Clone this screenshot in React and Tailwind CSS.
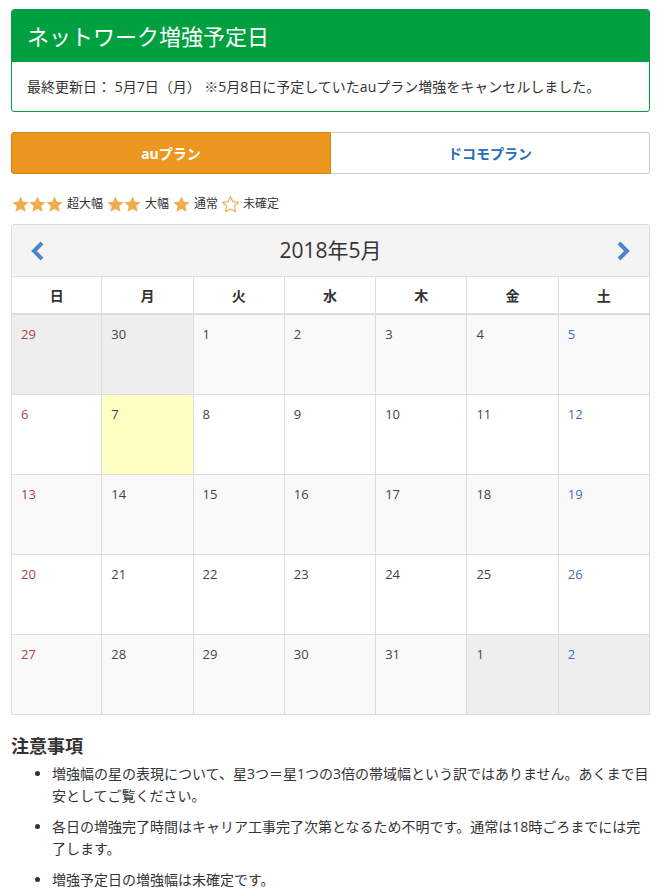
import React from "react";

const FONT = { fontFamily: '"Open Sans", "Noto Sans CJK JP", sans-serif' };

function StarIcon({ filled = true }) {
  return (
    <svg width="17" height="17" viewBox="0 0 24 24" className="shrink-0">
      <path
        d="M12 0.6l3.4 7.4 8.1.8-6.1 5.4 1.8 8L12 18.2l-7.2 4 1.8-8-6.1-5.4 8.1-.8z"
        fill={filled ? "#f0ad4e" : "#fff"}
        stroke="#f0ad4e"
        strokeWidth={filled ? 0 : 1.6}
        strokeLinejoin="round"
      />
    </svg>
  );
}

const weekdays = ["日", "月", "火", "水", "木", "金", "土"];

// [day, otherMonth]
const weeks = [
  [[29, true], [30, true], [1], [2], [3], [4], [5]],
  [[6], [7], [8], [9], [10], [11], [12]],
  [[13], [14], [15], [16], [17], [18], [19]],
  [[20], [21], [22], [23], [24], [25], [26]],
  [[27], [28], [29], [30], [31], [1, true], [2, true]],
];

function DayCell({ day, other, col, row, isToday }) {
  let bg = row % 2 === 0 ? "bg-[#f9f9f9]" : "bg-white";
  if (other) bg = "bg-[#eeeeee]";
  if (isToday) bg = "bg-[#ffffc4]";
  let color = "text-[#444]";
  if (col === 0) color = "text-[#a94442]";
  if (col === 6) color = "text-[#3f6fb5]";
  return (
    <div className={`h-[80px] border-r border-b border-[#dddddd] px-[9px] pt-[9px] text-[13px] leading-[20px] ${bg} ${color} ${col === 0 ? "border-l" : ""}`}>
      {day}
    </div>
  );
}

export default function App() {
  return (
    <div className="min-h-[889px] bg-white pt-[9px] text-[#333]" style={FONT}>
      <div className="ml-[11px] w-[639px]">
        {/* 見出しカード */}
        <div className="rounded-[3px] border border-[#00a040] overflow-hidden">
          <div className="bg-[#00a040] h-[52px] flex items-center px-[15px]">
            <h1 className="text-white text-[22px] font-normal leading-none">ネットワーク増強予定日</h1>
          </div>
          <div className="h-[49px] flex items-center px-[15px] text-[14px] text-[#333]">
            最終更新日： 5月7日（月） ※5月8日に予定していたauプラン増強をキャンセルしました。
          </div>
        </div>

        {/* タブ */}
        <div className="mt-[20px] flex h-[42px]">
          <button className="flex-1 bg-[#ec971f] border border-[#d58512] rounded-l-[3px] text-white font-bold text-[14px]">
            auプラン
          </button>
          <button className="flex-1 bg-white border border-l-0 border-[#cccccc] rounded-r-[3px] text-[#2a6ebb] font-bold text-[14px]">
            ドコモプラン
          </button>
        </div>

        {/* 凡例 */}
        <div className="mt-[21px] ml-[1px] flex items-center h-[18px] text-[12px] text-[#333]">
          <StarIcon /><StarIcon /><StarIcon />
          <span className="mx-[4px]">超大幅</span>
          <StarIcon /><StarIcon />
          <span className="mx-[4px]">大幅</span>
          <StarIcon />
          <span className="mx-[4px]">通常</span>
          <StarIcon filled={false} />
          <span className="ml-[4px]">未確定</span>
        </div>

        {/* カレンダー */}
        <div className="mt-[11px]">
          <div className="h-[53px] flex items-center justify-between px-[18px] bg-[#f4f4f4] border border-[#dddddd] rounded-t-[3px]">
            <svg width="16" height="20" viewBox="0 0 16 20">
              <path d="M12 2L4 10l8 8" fill="none" stroke="#4a86c8" strokeWidth="4" strokeLinejoin="miter" />
            </svg>
            <div className="text-[21px] text-[#333]">2018年5月</div>
            <svg width="16" height="20" viewBox="0 0 16 20">
              <path d="M4 2l8 8-8 8" fill="none" stroke="#4a86c8" strokeWidth="4" strokeLinejoin="miter" />
            </svg>
          </div>
          <div className="grid grid-cols-7">
            {weekdays.map((w, i) => (
              <div
                key={w}
                className={`h-[38px] flex items-center justify-center border-r border-b-2 border-[#dddddd] text-[14px] font-bold text-[#333] ${i === 0 ? "border-l" : ""}`}
              >
                {w}
              </div>
            ))}
            {weeks.map((week, r) =>
              week.map(([d, other], c) => (
                <DayCell
                  key={`${r}-${c}`}
                  day={d}
                  other={other}
                  col={c}
                  row={r}
                  isToday={r === 1 && c === 1}
                />
              ))
            )}
          </div>
        </div>

        {/* 注意事項 */}
        <h2 className="mt-[19px] text-[18px] font-bold text-[#333] leading-[24px]">注意事項</h2>
        <ul className="mt-[5px] list-disc pl-[41px] text-[14px] leading-[22px] text-[#333] space-y-[9px]">
          <li>増強幅の星の表現について、星3つ＝星1つの3倍の帯域幅という訳ではありません。あくまで目安としてご覧ください。</li>
          <li>各日の増強完了時間はキャリア工事完了次第となるため不明です。通常は18時ごろまでには完了します。</li>
          <li>増強予定日の増強幅は未確定です。</li>
        </ul>
      </div>
    </div>
  );
}
